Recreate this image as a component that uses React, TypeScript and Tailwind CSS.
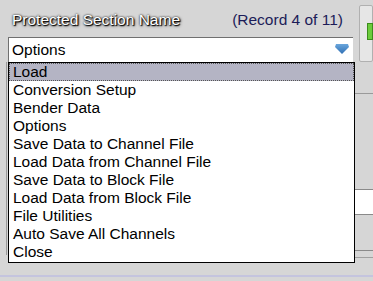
import React from "react";

const items = [
  "Load",
  "Conversion Setup",
  "Bender Data",
  "Options",
  "Save Data to Channel File",
  "Load Data from Channel File",
  "Save Data to Block File",
  "Load Data from Block File",
  "File Utilities",
  "Auto Save All Channels",
  "Close",
];

export default function App() {
  return (
    <div
      className="relative w-[373px] h-[281px] overflow-hidden bg-[#d6d6d6] text-[15.5px] leading-[18px]"
      style={{ fontFamily: '"Liberation Sans", Arial, sans-serif' }}
    >
      <div className="flex h-[62px]">
        <div className="flex flex-col w-[355px]">
          <div className="flex h-[37px] pt-[11px] pl-[12px] pr-[10px]">
            <span className="text-white [text-shadow:1px_1px_1px_#000,0_0_2px_#111,1px_1px_3px_#333]">
              Protected Section Name
            </span>
            <span className="ml-auto text-[#1c1c58]">(Record 4 of 11)</span>
          </div>
          <div className="ml-[8px] h-[25px] bg-white border-t border-l border-[#707070] flex items-center pl-[3px] pr-[4px]">
            <span className="text-black">Options</span>
            <svg className="ml-auto mt-[-2px]" width="14" height="10" viewBox="0 0 14 10">
              <defs>
                <linearGradient id="ag" x1="0" y1="0" x2="0" y2="1">
                  <stop offset="0" stopColor="#6aa6dc" />
                  <stop offset="1" stopColor="#2f6fb4" />
                </linearGradient>
              </defs>
              <polygon points="1,0 13,0 14,3 7,10 0,3" fill="url(#ag)" />
            </svg>
          </div>
        </div>
        <div className="ml-[6px] mt-[5px] w-[14px] h-[57px] bg-[#e6e6e6] border border-[#b0b0b0] rounded-[2px] pt-[17px] pl-[7px]">
          <div className="w-[6px] h-[17px] bg-[#6ccc3c] border border-[#3c8c1c]" />
        </div>
      </div>
      <div className="flex h-[196px]">
        <div className="w-[7px] border-r border-[#9a9a9a] mb-[3px]" />
        <div className="flex-1" />
        <div className="w-[18px] flex flex-col">
          <div className="h-[31px]" />
          <div className="h-[1px] bg-[#9a9a9a]" />
          <div className="h-[95px]" />
          <div className="h-[1px] bg-[#8a8a8a]" />
          <div className="h-[24px] bg-white" />
          <div className="h-[1px] bg-[#8a8a8a]" />
          <div className="h-[35px]" />
          <div className="h-[1px] bg-[#8a8a8a]" />
          <div className="h-[6px]" />
          <div className="h-[1px] bg-[#a0a0a0]" />
        </div>
      </div>
      <div className="h-[20px] flex flex-col">
        <div className="h-[17px]" />
        <div className="h-[2px] bg-[#c4c4de]" />
      </div>

      <div className="absolute left-[8px] top-[62px] w-[347px] h-[201px] bg-white border border-black">
        {items.map((it, i) => (
          <div
            key={it}
            className={
              i === 0
                ? "h-[18px] pl-[3px] bg-[#b4b4c4] border border-dotted border-[#555] leading-[16px] text-black"
                : "h-[18px] pl-[4px] text-black leading-[18px]"
            }
          >
            {it}
          </div>
        ))}
      </div>
    </div>
  );
}
